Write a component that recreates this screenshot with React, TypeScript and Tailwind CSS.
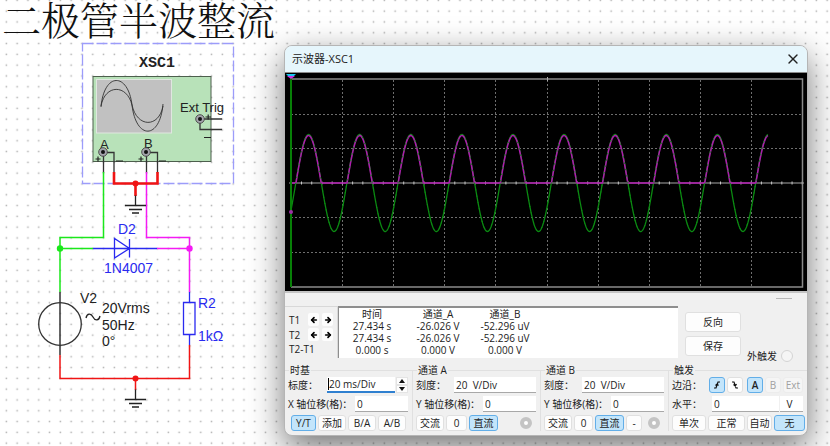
import React from 'react';
import clsx from 'clsx';
import { X, ArrowLeft, ArrowRight } from 'lucide-react';

const PERIOD = 51.1;
const MID = 110;

// Plot coordinates are relative to the black screen (522 x 218)
const wave = (rectified: boolean) => {
    const points: string[] = [];
    for (let x = 6; x <= 483; x += 0.5) {
        const v = Math.sin(((x - 10.8) / PERIOD) * Math.PI * 2) * 48.5;
        const y = rectified ? MID - Math.max(0, v - 1) : MID - v;
        points.push(`${x.toFixed(1)},${y.toFixed(1)}`);
    }
    return points.join(' ');
};

const columns = [57, 108, 159, 210, 262, 313, 364, 415, 466];
const rows = [41, 75, 144, 179];

const Scope: React.FC = () => (
    <svg viewBox="0 0 522 218" preserveAspectRatio="none" className="block w-full h-[218px] bg-black" fill="none">
        {columns.map((x) => (
            <line key={x} x1={x + 0.5} x2={x + 0.5} y1="7" y2="214" stroke="#6e6e6e" strokeDasharray="2 2" />
        ))}
        {rows.map((y) => (
            <line key={y} x1="6" x2="517" y1={y + 0.5} y2={y + 0.5} stroke="#6e6e6e" strokeDasharray="2 2" />
        ))}
        <path d="M6 6H517.5V214H6" stroke="#8a8a8a" strokeWidth="1.5" />
        <line x1="4" x2="519" y1="110" y2="110" stroke="#a8a8a8" />
        <line x1="16" x2="517" y1="110" y2="110" stroke="#c8c8c8" strokeWidth="3" strokeDasharray="1 9.22" />
        <line x1="262.5" x2="262.5" y1="4" y2="8" stroke="#aaa" />
        <polyline points={wave(false)} stroke="#0b8a12" strokeWidth="1.3" />
        <polyline points={wave(true)} stroke="#b018b0" strokeWidth="1.5" />
        <polyline points={wave(false)} stroke="#0b8a12" strokeWidth="1" strokeDasharray="1.5 5" />
        <line x1="6" x2="6" y1="5" y2="214" stroke="#078007" strokeWidth="2" />
        <path d="M1 1H11L9 3H3Z" fill="#18c8f0" />
        <path d="M2 3H10L6 6Z" fill="#d030e0" />
        <circle cx="6" cy="139" r="2" fill="#a030a8" />
    </svg>
);

const Terminal: React.FC<{ x: number; y: number }> = ({ x, y }) => (
    <g>
        <circle cx={x} cy={y} r="4.3" fill="#a5a5ad" stroke="#444" strokeWidth="0.9" />
        <circle cx={x} cy={y} r="2" fill="#111" />
    </g>
);

const Ground: React.FC<{ x: number; y: number }> = ({ x, y }) => (
    <path
        d={`M${x} ${y - 10}V${y}M${x - 10.5} ${y}H${x + 10.5}M${x - 6.5} ${y + 4}H${x + 6.5}M${x - 3.5} ${y + 7.5}H${x + 3.5}`}
        stroke="#222"
        strokeWidth="1.3"
    />
);

const Circuit: React.FC = () => (
    <svg viewBox="0 36 280 382" className="block w-[280px] h-[382px]" fill="none" fontFamily="'Liberation Sans', Arial, sans-serif" fontSize="14">
        <rect x="82.5" y="43.5" width="151" height="140" stroke="#9c9cfa" strokeWidth="1.3" strokeDasharray="11 3" />
        <text x="139" y="67" fill="#222" fontFamily="'Liberation Mono', monospace" fontWeight="bold" fontSize="15">XSC1</text>
        <rect x="93" y="76.5" width="118" height="85" fill="#b8e2b9" stroke="#4d5f4d" />
        <rect x="96.5" y="79.5" width="75" height="53.5" fill="#c1c1c1" stroke="#e0e6e0" />
        <path d="M101 107C104 72 128 72 132 105C136 140 160 140 163 104" stroke="#333" strokeWidth="0.9" />
        <path d="M101 106C105 84 127 84 132 105C137 128 159 128 163 106" stroke="#333" strokeWidth="0.9" />

        <path d="M103.500 152V173M103 152.500H114V173M146.500 152V173M146 152.500H157.500V173M200 119H222M200 119V129.500H222" stroke="#333" strokeWidth="1.3" />
        <path d="M95.500 159H100.500M98 156.500V161.500M138.500 159H143.500M141 156.500V161.500M205.500 117H211M208.200 114.500V119.500M116 161H123M159 161H166M204 137.500H211" stroke="#222" strokeWidth="1.2" />
        <g fill="#222" fontSize="13">
            <text x="180" y="112">Ext Trig</text>
            <text x="100" y="149">A</text>
            <text x="144" y="148">B</text>
        </g>
        <Terminal x={103} y={152} />
        <Terminal x={146} y={152} />
        <Terminal x={200} y={119} />

        {/* wires */}
        <path d="M103.500 172V237.500H60V292M60 248.500H93" stroke="#1be81b" strokeWidth="1.5" />
        <path d="M146.500 172V237.500H189.500V292M189.500 248.500H157" stroke="#f41bf4" strokeWidth="1.5" />
        <path d="M114 172V183.500H157.500V172M135.500 183V196" stroke="#f01414" strokeWidth="2.6" />
        <path d="M60 355V378.500H189.500V345M135.500 378V390" stroke="#f01414" strokeWidth="1.5" />
        <Ground x={135.5} y={205.5} />
        <Ground x={135.5} y={399.5} />
        <circle cx="135.500" cy="183.500" r="3" fill="#f01414" />
        <circle cx="135.500" cy="378.500" r="3" fill="#f01414" />
        <circle cx="60" cy="248.500" r="3.200" fill="#1be81b" />
        <circle cx="189.500" cy="248.500" r="3.200" fill="#f41bf4" />

        {/* diode, source, load */}
        <path d="M93 248.500H157M114.500 238.500V258L129.500 248.500ZM129.500 239V257.500M189.500 292V302.500M183.500 302.500H195V334.500H183.500ZM189.500 334.500V345" stroke="#2a2af0" strokeWidth="1.3" />
        <path d="M60 292V355" stroke="#333" strokeWidth="1.5" />
        <circle cx="60" cy="324" r="21.300" stroke="#333" strokeWidth="1.3" />
        <path d="M86 318C87 313 91 313 93 317C95 321 99 321 100 316" stroke="#222" strokeWidth="1.3" />
        <g fill="#222">
            <text x="80" y="303">V2</text>
            <text x="102" y="313">20Vrms</text>
            <text x="102" y="330">50Hz</text>
            <text x="102" y="346">0°</text>
        </g>
        <g fill="#2a2af0">
            <text x="118" y="234">D2</text>
            <text x="104" y="273">1N4007</text>
            <text x="198" y="308">R2</text>
            <text x="198" y="341">1kΩ</text>
        </g>
    </svg>
);

const Btn: React.FC<{ children: React.ReactNode; active?: boolean; disabled?: boolean; className?: string; label?: string }> = ({
    children,
    active,
    disabled,
    className,
    label,
}) => (
    <button
        type="button"
        disabled={disabled}
        aria-label={label}
        aria-pressed={active}
        className={clsx(
            'shrink-0 flex items-center justify-center rounded-[3px] border whitespace-nowrap',
            active && 'bg-[#c3e5fb] border-[#62aee8]',
            disabled && 'text-[#a0a0a0] bg-[#f5f5f5] border-[#ececec]',
            !active && !disabled && 'bg-[#fdfdfd] border-[#e0e0e0]',
            className
        )}
    >
        {children}
    </button>
);

const Field: React.FC<{ id: string; label: string; value: string; inputClass: string; focused?: boolean; children?: React.ReactNode }> = ({
    id,
    label,
    value,
    inputClass,
    focused,
    children,
}) => (
    <div className="flex items-center h-4">
        <label htmlFor={id} className="flex-1 w-0 whitespace-nowrap">{label}</label>
        <div className={clsx('relative h-4', inputClass)}>
            <input
                id={id}
                defaultValue={value}
                className={clsx('block w-full h-4 pl-[2px] bg-white border-b outline-none', focused ? 'border-b-2 border-[#2f80d0]' : 'border-[#a8a8a8]')}
            />
            {focused && <span className="absolute left-px top-px w-px h-3 bg-black" />}
        </div>
        {children}
    </div>
);

const Group: React.FC<{ title: string; children: React.ReactNode }> = ({ title, children }) => (
    <fieldset className="relative min-w-0 border-t border-r border-[#e0e0e0] last:border-r-0 pt-[6px] pl-[3px] pr-1">
        <legend className="absolute left-1 -top-[7px] px-px leading-3 bg-[#f0f0f0]">{title}</legend>
        <div className="flex flex-col gap-[3px]">{children}</div>
    </fieldset>
);

const Ring: React.FC<{ label: string }> = ({ label }) => (
    <input type="radio" aria-label={label} className="appearance-none size-3 shrink-0 rounded-full bg-white border-4 border-[#c4c4c4] ml-auto mr-1" />
);

const readings = [
    ['27.434 s', '-26.026 V', '-52.296 uV'],
    ['27.434 s', '-26.026 V', '-52.296 uV'],
    ['0.000 s', '0.000 V', '0.000 V'],
];

const App: React.FC = () => {
    return (
        <main className="relative min-h-screen flex items-start overflow-hidden bg-white text-[#222] font-['Open_Sans','Noto_Sans_CJK_SC',sans-serif]">
            <svg className="absolute inset-0 size-full" aria-hidden="true">
                <defs>
                    <pattern id="dots" x="1" y="-5" width="10.8" height="10.8" patternUnits="userSpaceOnUse">
                        <rect x="4.600" y="4.600" width="1.500" height="1.500" fill="#b0b0b0" />
                    </pattern>
                </defs>
                <rect width="100%" height="100%" fill="url(#dots)" />
            </svg>

            <section className="relative w-[284px] shrink-0">
                <h1 className="pl-[2px] text-[39px] leading-9 font-light whitespace-nowrap text-[#111] font-['Noto_Serif_CJK_SC','Noto_Sans_CJK_SC',serif]">二极管半波整流</h1>
                <Circuit />
            </section>

            <section className="relative flex-1 min-w-0 mt-[45px] mr-[22px] mb-[11px] rounded-lg border border-[#b5b5b5] bg-[#f0f0f0] overflow-hidden text-[10px] leading-4 shadow-[0_12px_34px_rgba(0,0,0,0.55)]">
                <header className="flex items-center justify-between h-[27px] pl-[7px] pr-[6px] bg-[#e6f6fc] border-b border-[#8a8a8a]">
                    <h2 className="text-[11px]">示波器-XSC1</h2>
                    <button type="button" aria-label="关闭">
                        <X size={16} strokeWidth={2} />
                    </button>
                </header>
                <Scope />
                <div className="flex justify-end h-[15px] pt-[5px] pr-[15px] border-t-2 border-[#c4c4c4]">
                    <span className="w-4 h-px bg-[#b8b8b8]" />
                </div>

                <div className="flex h-[64px]">
                    <div className="w-[53px] shrink-0 h-[52px] pl-1 pt-[5px] border-t border-r border-[#d8d8d8]">
                        {['T1', 'T2'].map((t) => (
                            <div key={t} className="flex items-center h-[15px] gap-[3px]">
                                <span className="w-4">{t}</span>
                                <button type="button" aria-label={`${t} 左移`} className="flex items-center justify-center w-[11px] h-[13px] rounded-xs bg-[#fdfdfd]">
                                    <ArrowLeft size={8} strokeWidth={5} className="text-black" />
                                </button>
                                <button type="button" aria-label={`${t} 右移`} className="flex items-center justify-center w-[11px] h-[13px] rounded-xs bg-[#fdfdfd]">
                                    <ArrowRight size={8} strokeWidth={5} className="text-black" />
                                </button>
                            </div>
                        ))}
                        <div className="leading-[15px]">T2-T1</div>
                    </div>
                    <div className="flex-1 h-[52px] bg-white border-t-2 border-l border-[#8e8e8e]">
                        <table className="table-fixed w-[200px] text-center leading-3">
                            <thead>
                                <tr>
                                    <th className="w-[66px] font-normal">时间</th>
                                    <th className="w-[66px] font-normal">通道_A</th>
                                    <th className="w-[68px] font-normal">通道_B</th>
                                </tr>
                            </thead>
                            <tbody>
                                {readings.map((row, i) => (
                                    <tr key={i}>
                                        {row.map((cell, j) => (
                                            <td key={j} className="whitespace-nowrap">{cell}</td>
                                        ))}
                                    </tr>
                                ))}
                            </tbody>
                        </table>
                    </div>
                    <div className="w-[129px] shrink-0 pl-[7px] pt-[6px]">
                        <Btn className="w-14 h-5 mb-1">反向</Btn>
                        <div className="flex">
                            <Btn className="w-14 h-5">保存</Btn>
                            <label className="flex items-center gap-1 pl-[6px] pt-3 h-7 whitespace-nowrap">
                                外触发
                                <input type="radio" className="appearance-none size-3 rounded-full border border-[#d4d4d4] bg-[#f5f5f5]" />
                            </label>
                        </div>
                    </div>
                </div>

                <div className="grid grid-cols-[128fr_128fr_128fr_138fr] pb-1">
                    <Group title="时基">
                        <Field id="tb-scale" label="标度：" value="20 ms/Div" inputClass="w-[68px]" focused>
                            <div className="flex flex-col w-[13px] pl-px">
                                {['▲', '▼'].map((a) => (
                                    <button key={a} type="button" aria-label={a === '▲' ? '增大' : '减小'} className="h-2 flex items-center justify-center bg-[#fdfdfd] border border-[#e4e4e4]">
                                        <svg viewBox="0 0 6 4" className="w-[6px] h-1" fill="#111">
                                            <path d={a === '▲' ? 'M0 4L3 0L6 4Z' : 'M0 0L3 4L6 0Z'} />
                                        </svg>
                                    </button>
                                ))}
                            </div>
                        </Field>
                        <Field id="tb-pos" label="X 轴位移(格)：" value="0" inputClass="w-[53px]" />
                        <div className="flex gap-[2px] pl-[3px]">
                            <Btn active className="h-4 w-[25px]">Y/T</Btn>
                            <Btn className="h-4 w-7">添加</Btn>
                            <Btn className="h-4 w-7">B/A</Btn>
                            <Btn className="h-4 w-7">A/B</Btn>
                        </div>
                    </Group>
                    <Group title="通道 A">
                        <Field id="a-scale" label="刻度：" value="20  V/Div" inputClass="w-[82px]" />
                        <Field id="a-pos" label="Y 轴位移(格)：" value="0" inputClass="w-[53px]" />
                        <div className="flex items-center gap-[2px]">
                            <Btn className="h-4 w-7">交流</Btn>
                            <Btn className="h-4 w-[21px]">0</Btn>
                            <Btn active className="h-4 w-[29px]">直流</Btn>
                            <Ring label="通道 A" />
                        </div>
                    </Group>
                    <Group title="通道 B">
                        <Field id="b-scale" label="刻度：" value="20  V/Div" inputClass="w-[82px]" />
                        <Field id="b-pos" label="Y 轴位移(格)：" value="0" inputClass="w-[53px]" />
                        <div className="flex items-center gap-[2px]">
                            <Btn className="h-4 w-7">交流</Btn>
                            <Btn className="h-4 w-[19px]">0</Btn>
                            <Btn active className="h-4 w-[29px]">直流</Btn>
                            <Btn className="h-4 w-4">-</Btn>
                            <Ring label="通道 B" />
                        </div>
                    </Group>
                    <Group title="触发">
                        <div className="flex items-center gap-[2px] h-4">
                            <span className="flex-1 w-0 whitespace-nowrap">边沿：</span>
                            <Btn active label="上升沿" className="h-4 w-4">
                                <svg viewBox="0 0 8 8" className="size-2" fill="none" stroke="#111" strokeWidth="1.2">
                                    <path d="M1 7H3L5 1H7M2.500 4.500L4 3L5.500 4.500" />
                                </svg>
                            </Btn>
                            <Btn label="下降沿" className="h-4 w-4 mr-[2px]">
                                <svg viewBox="0 0 8 8" className="size-2" fill="none" stroke="#111" strokeWidth="1.2">
                                    <path d="M1 1H3L5 7H7M2.500 3.500L4.300 5L5.500 3" />
                                </svg>
                            </Btn>
                            <Btn active className="h-4 w-4 font-semibold">A</Btn>
                            <Btn disabled className="h-4 w-4">B</Btn>
                            <Btn disabled className="h-4 w-5">Ext</Btn>
                        </div>
                        <Field id="level" label="水平：" value="0" inputClass="w-[67px]">
                            <input aria-label="单位" defaultValue="V" className="w-[23px] h-4 ml-px pr-1 text-center bg-white border-b border-[#a8a8a8] outline-none" />
                        </Field>
                        <div className="flex gap-[2px]">
                            <Btn className="h-4 w-[34px]">单次</Btn>
                            <Btn className="h-4 w-[37px]">正常</Btn>
                            <Btn className="h-4 w-[25px]">自动</Btn>
                            <Btn active className="h-4 w-[31px]">无</Btn>
                        </div>
                    </Group>
                </div>
            </section>
        </main>
    );
};

export default App;
